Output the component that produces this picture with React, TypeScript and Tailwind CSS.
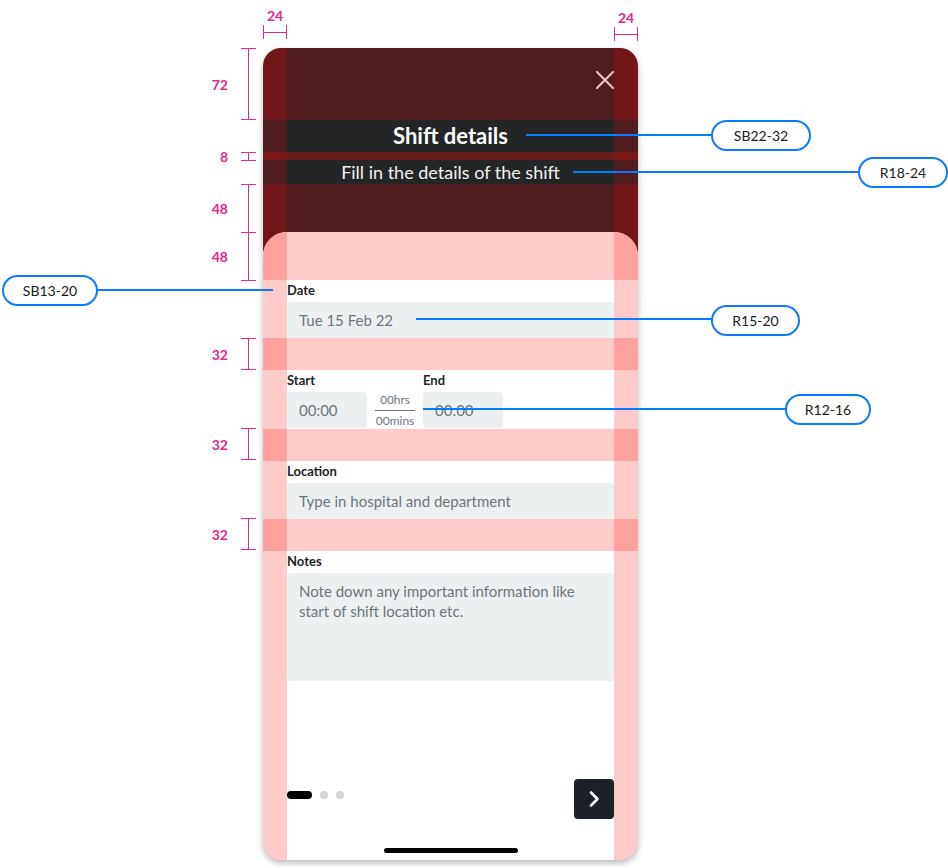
import React from 'react';

const font = { fontFamily: 'Lato, "Open Sans", sans-serif' };

type BandProps = {
  className?: string;
  side: string;
  mid: string;
  children?: React.ReactNode;
};

// one horizontal strip of the phone, with the 24px margin guides on both sides
function Band({ className = '', side, mid, children }: BandProps) {
  return (
    <div className={`flex shrink-0 ${className}`}>
      <div className={`w-6 shrink-0 ${side}`} />
      <div className={`flex-1 min-w-0 ${mid}`}>{children}</div>
      <div className={`w-6 shrink-0 ${side}`} />
    </div>
  );
}

const PinkGap = () => <Band className="h-8" side="bg-[#ffa19f]" mid="bg-[#ffcaca]" />;

function Field({ label, children }: { label: string; children: React.ReactNode }) {
  return (
    <div className="flex flex-col">
      <div className="h-5 text-[13px] leading-5 font-bold text-[#1f2326]">{label}</div>
      <div className="mt-[2px]">{children}</div>
    </div>
  );
}

function Input({ text, className = '' }: { text: string; className?: string }) {
  return (
    <div className={`h-9 rounded-[4px] bg-[#edf0f1] px-3 flex items-center text-[15px] text-[#6d777c] ${className}`}>
      {text}
    </div>
  );
}

function Phone() {
  return (
    <div className="w-[375px] h-[812px] rounded-[18px] overflow-hidden flex flex-col shadow-[0_3px_6px_rgba(0,0,0,0.28)]">
      {/* header */}
      <Band className="h-[72px]" side="bg-[#721719]" mid="bg-[#4f1d1f]">
        <div className="flex justify-end pt-[23px]">
          <svg width="18" height="18" viewBox="0 0 18 18">
            <path d="M1 1 L17 17 M17 1 L1 17" stroke="#f2c4c4" strokeWidth="2" strokeLinecap="round" />
          </svg>
        </div>
      </Band>
      <Band className="h-8" side="bg-[#4f1d1f]" mid="bg-[#232527]">
        <div className="text-center text-[22px] leading-8 font-bold text-white">Shift details</div>
      </Band>
      <Band className="h-2" side="bg-[#7a1719]" mid="bg-[#661b1d]" />
      <Band className="h-6" side="bg-[#4f1d1f]" mid="bg-[#232527]">
        <div className="text-center text-[18px] leading-6 text-[#f2f2f2]">Fill in the details of the shift</div>
      </Band>
      <Band className="h-12" side="bg-[#721719]" mid="bg-[#4f1d1f]" />

      {/* sheet */}
      <div className="flex-1 flex flex-col bg-[#721719]">
        <div className="flex-1 flex flex-col rounded-t-[24px] overflow-hidden bg-white">
          <Band className="h-12" side="bg-[#ffa19f]" mid="bg-[#ffcaca]" />
          <Band side="bg-[#ffcaca]" mid="bg-white">
            <Field label="Date">
              <Input text="Tue 15 Feb 22" />
            </Field>
          </Band>
          <PinkGap />
          <Band side="bg-[#ffcaca]" mid="bg-white">
            <div className="flex gap-2">
              <Field label="Start">
                <Input text="00:00" className="w-20" />
              </Field>
              <div className="w-10 pt-[22px] flex flex-col items-center text-[12px] text-[#6d777c]">
                <div className="h-4 leading-4">00hrs</div>
                <div className="w-10 h-px bg-[#6d777c] my-[2px]" />
                <div className="h-4 leading-4">00mins</div>
              </div>
              <Field label="End">
                <Input text="00:00" className="w-20" />
              </Field>
            </div>
          </Band>
          <PinkGap />
          <Band side="bg-[#ffcaca]" mid="bg-white">
            <Field label="Location">
              <Input text="Type in hospital and department" />
            </Field>
          </Band>
          <PinkGap />
          <Band className="flex-1" side="bg-[#ffcaca]" mid="bg-white flex flex-col">
            <Field label="Notes">
              <div className="h-[108px] rounded-[4px] bg-[#edf0f1] px-3 pt-2 text-[15px] leading-5 text-[#6d777c]">
                Note down any important information like start of shift location etc.
              </div>
            </Field>
            <div className="flex-1" />
            <div className="flex justify-between">
              <div className="flex items-center gap-2 mt-3 h-2 self-start">
                <div className="w-[25px] h-2 rounded-full bg-black" />
                <div className="w-2 h-2 rounded-full bg-[#d1d5d8]" />
                <div className="w-2 h-2 rounded-full bg-[#d1d5d8]" />
              </div>
              <div className="w-10 h-10 rounded-[4px] bg-[#1b2126] flex items-center justify-center">
                <svg width="12" height="18" viewBox="0 0 12 18">
                  <path d="M3 2.5 L9.5 9 L3 15.5" fill="none" stroke="white" strokeWidth="2.6" strokeLinecap="round" strokeLinejoin="round" />
                </svg>
              </div>
            </div>
            <div className="mt-[29px] mb-[7px] mx-auto w-[134px] h-[5px] rounded-full bg-black" />
          </Band>
        </div>
      </div>
    </div>
  );
}

function VDim({ className, label }: { className: string; label: string }) {
  return (
    <div className={`absolute left-[200px] w-[56px] flex items-center ${className}`}>
      <div className="flex-1 text-right pr-[13px] text-[14px] font-bold text-[#e4278c]">{label}</div>
      <div className="relative w-[15px] self-stretch">
        <div className="absolute top-0 left-0 w-[15px] h-px bg-[#e4278c]" />
        <div className="absolute top-0 bottom-0 left-[7px] w-px bg-[#e4278c]" />
        <div className="absolute bottom-0 left-0 w-[15px] h-px bg-[#e4278c]" />
      </div>
    </div>
  );
}

function HDim({ className }: { className: string }) {
  return (
    <div className={`absolute w-6 h-[14px] ${className}`}>
      <div className="absolute left-0 top-0 bottom-0 w-px bg-[#e4278c]" />
      <div className="absolute left-0 right-0 top-[7px] h-px bg-[#e4278c]" />
      <div className="absolute right-0 top-0 bottom-0 w-px bg-[#e4278c]" />
    </div>
  );
}

function Pill({ className, label }: { className: string; label: string }) {
  return (
    <div className={`absolute h-[31px] rounded-full border-2 border-[#0a7aff] bg-white flex items-center justify-center text-[14px] text-[#1a1a1a] ${className}`}>
      {label}
    </div>
  );
}

export default function App() {
  return (
    <div className="relative w-[948px] h-[868px] bg-white overflow-hidden" style={font}>
      <div className="pt-12 pl-[263px]">
        <Phone />
      </div>

      {/* margin dimensions */}
      <div className="absolute left-[267px] top-[5px] text-[14px] font-bold text-[#e4278c]">24</div>
      <HDim className="left-[263px] top-[25px]" />
      <div className="absolute left-[618px] top-[7px] text-[14px] font-bold text-[#e4278c]">24</div>
      <HDim className="left-[614px] top-[27px]" />

      <VDim className="top-[48px] h-[72px]" label="72" />
      <VDim className="top-[152px] h-[9px]" label="8" />
      <VDim className="top-[184px] h-[49px]" label="48" />
      <VDim className="top-[232px] h-[49px]" label="48" />
      <VDim className="top-[338px] h-[32px]" label="32" />
      <VDim className="top-[428px] h-[32px]" label="32" />
      <VDim className="top-[518px] h-[32px]" label="32" />

      {/* type callouts */}
      <div className="absolute left-[526px] top-[134px] w-[186px] h-[2px] bg-[#0a7aff]" />
      <Pill className="left-[711px] top-[120px] w-[100px]" label="SB22-32" />
      <div className="absolute left-[573px] top-[171px] w-[286px] h-[2px] bg-[#0a7aff]" />
      <Pill className="left-[858px] top-[157px] w-[90px]" label="R18-24" />
      <div className="absolute left-[97px] top-[289px] w-[176px] h-[2px] bg-[#0a7aff]" />
      <Pill className="left-[2px] top-[275px] w-[96px]" label="SB13-20" />
      <div className="absolute left-[416px] top-[318px] w-[296px] h-[2px] bg-[#0a7aff]" />
      <Pill className="left-[711px] top-[305px] w-[89px]" label="R15-20" />
      <div className="absolute left-[423px] top-[408px] w-[363px] h-[2px] bg-[#0a7aff]" />
      <Pill className="left-[785px] top-[394px] w-[86px]" label="R12-16" />
    </div>
  );
}
